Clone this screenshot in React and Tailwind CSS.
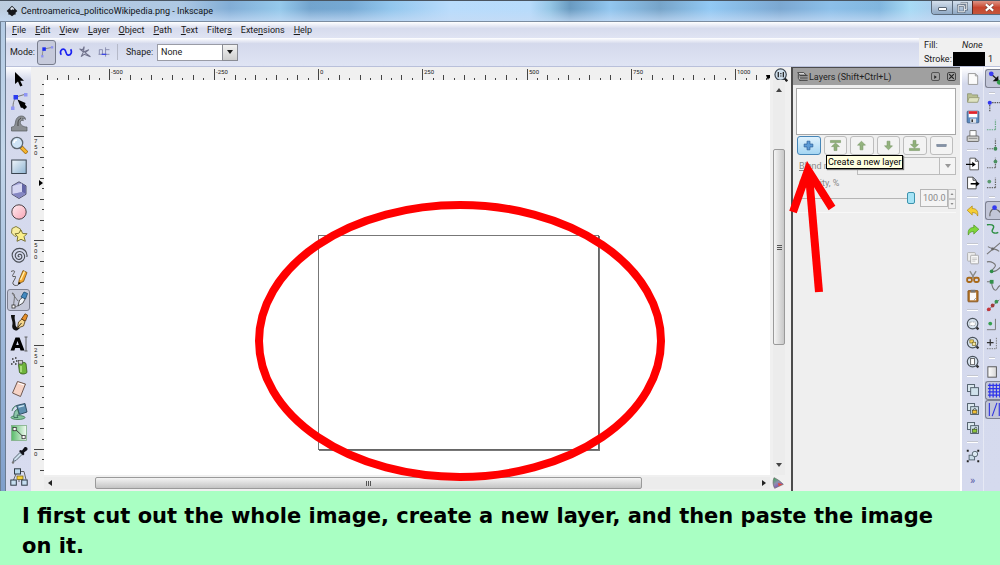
import React, { useState } from 'react';
import clsx from 'clsx';

// Base for the small toolbar drawings
function Ico({ size = 18, className, children }) {
  return (
    <svg width={size} height={size} viewBox="0 0 18 18" fill="none" className={clsx('shrink-0', className)} aria-hidden="true">
      {children}
    </svg>
  );
}

// ---------- Toolbox ----------
const tools = [
  ['Select', <path d="M5 2v12l3-2.600 2.200 5 2.300-1-2.300-4.600H14z" fill="#000" />],
  ['Edit nodes', <>
    <path d="M3 16C3 10 4 8 6 6M6 5l10-3" stroke="#777" />
    <rect x="3.500" y="3" width="4.500" height="4.500" fill="#2a3cf0" />
    <rect x="14" y="1" width="3.500" height="3.500" fill="#8f96f5" />
    <rect x="1" y="14.500" width="3.500" height="3.500" fill="#8f96f5" />
    <path d="M7.500 7.500l8 3.500-.5 1.500 2 2.500-2.500 2.500-2.500-2-1 .5z" fill="#000" />
  </>],
  ['Tweak', <>
    <path d="M1.500 17v-4c3 0 3.500-2 4-5C6 4 8.500 2 11.500 2c2.500 0 4 1.500 4 3.500-1-1-2.500-1.300-3.500-.8 1 .3 1.500 1 1.300 2-1.300-.7-3-.2-3 1.800 0 2.500 3 4.500 6.700 4.500v4z" fill="#8b8f93" stroke="#55595d" strokeWidth=".7" />
    <path d="M8 12c0-3-.5-6 3-8" stroke="#444" />
  </>],
  ['Zoom', <>
    <path d="M11 11l6 6" stroke="#a06a10" strokeWidth="4" />
    <path d="M11.500 11.500l5 5" stroke="#f5b52e" strokeWidth="2.500" />
    <circle cx="7" cy="7" r="5.700" fill="#cfe4f6" stroke="#5c6670" strokeWidth="1.300" />
    <path d="M4 7c0-2 1-3 3-3" stroke="#fff" strokeWidth="1.500" />
  </>],
  ['Rectangle', <>
    <rect x="1.700" y="2" width="14.500" height="13.500" fill="url(#rectFill)" stroke="#3a4450" />
  </>],
  ['3D box', <>
    <path d="M9 .8l7 4v8.500l-7 4.200-7-4.200V4.800z" fill="#a3a4d8" stroke="#46465e" strokeWidth=".9" />
    <path d="M2.500 5L12 2.500V11l-9.500 2z" fill="#d5d6f2" />
    <path d="M12 2.500l3.700 2.500v8L12 11z" fill="#6365a6" />
    <path d="M2.500 13L12 11l3.500 2L9 17z" fill="#8587c2" />
  </>],
  ['Ellipse', <circle cx="9" cy="9" r="7.200" fill="url(#pinkFill)" stroke="#4d4045" />],
  ['Star', <>
    <path d="M2 3.500l4-2 4.500 2.500L10 9l-5 2.500L1.500 8z" fill="#f7eda0" stroke="#7b7430" strokeWidth=".9" />
    <path d="M11 5l1.700 3.500 4.300.2-3 3 1.300 4.600-4.300-2-4 2 .8-4.500-2.800-3 3.800-.5z" fill="#fbf08a" stroke="#6f6828" strokeWidth=".9" />
  </>],
  ['Spiral', <path d="M9.500 9.500c-.8.700-1.800-.2-1.300-1.300.8-1.600 3.700-1 3.700 1.400 0 3-4.200 4-5.900 1.200C4 7.500 6.500 4.300 9.800 4.500c3.500.2 5.500 3.500 4.600 6.700-1.200 3.800-5.800 5-9 2.800C1.500 11.300 1.300 6.500 4 3.600 7 .6 12 .6 15 3.500c1.700 1.700 2.300 4 1.900 6.500" stroke="#4a4e55" strokeWidth="1.100" />],
  ['Pencil', <>
    <path d="M1 2.500c2-1 4-1 3.500.5S1.500 7 3 7.500s3-1 2.500 1-3.500 5-2.500 6.500 3 2 5 1" stroke="#555" />
    <path d="M8.500 14.500l.8-4L13 1.500l4 2-3.500 9z" fill="#f6a931" stroke="#76500e" strokeWidth=".8" />
    <path d="M10.500 11l4-8.500" stroke="#fff3b0" strokeWidth="1.300" />
    <path d="M8 16l.8-3 2 1.300z" fill="#000" />
  </>],
  ['Bezier', <>
    <path d="M2 2c4 0 2 6 1.500 13M2 2l6 8M4 15.500c4 1 5-2 6-5" stroke="#666" strokeWidth=".9" />
    <path d="M8 15l1.500-6L13 6l2 2-2 4z" fill="#f0f4f8" stroke="#333" strokeWidth=".8" />
    <path d="M11 6l3-5 3.500 1.500L15.500 8z" fill="#4289c0" stroke="#1c4b70" strokeWidth=".8" />
    <rect x="2" y="14" width="3" height="3" fill="#fff" stroke="#333" strokeWidth=".8" />
  </>],
  ['Calligraphy', <>
    <path d="M1 2h4c-1 4 .5 6 .5 9 0 3 2 4 4.500 4l-3 2.500C3 17.500 1.500 15 2.500 11 3 8 1 6 1 2z" fill="#111" />
    <path d="M7.500 15l1-6 3.500-3 3 2.500-1.500 4.500z" fill="#f4d58d" stroke="#4a3510" strokeWidth=".8" />
    <path d="M11.500 6L15 .8l2.700 1.500L15.500 8z" fill="#e8902a" stroke="#5b3506" strokeWidth=".8" />
    <path d="M8 14l3.500-4" stroke="#222" strokeWidth=".9" />
  </>],
  ['Text', <>
    <path d="M14.500 2h3M16 2v14M14.500 16h3" stroke="#555" strokeWidth=".9" />
    <path fillRule="evenodd" d="M.5 15.500L5.500 2.500h4l5 13h-4l-.8-2.500H5.200l-.8 2.500zM6.200 10h2.600L7.500 6z" fill="#000" />
  </>],
  ['Spray', <>
    <path d="M8.500 8c0-2 5-4 7.500-1.500l1 9c-2 2-6 2-7.500 0z" fill="#6fb43c" stroke="#33581a" strokeWidth=".8" />
    <path d="M11 9v6" stroke="#b9ea8c" strokeWidth="1.500" />
    <rect x="8.500" y="3.500" width="4" height="3.500" fill="#ccc" stroke="#444" strokeWidth=".7" />
    <path d="M2 2h1.500M5 1h1.500M3 5h1.500M6 4h1.500M1 7h1.500M5 7h1.500" stroke="#333" strokeWidth="1.500" />
  </>],
  ['Eraser', <>
    <path d="M7.500 1.500l8 2.500-5 12.500-8-3.500z" fill="#f6d3c6" stroke="#6e5850" />
    <path d="M8 3l6 2" stroke="#fff" />
  </>],
  ['Paint bucket', <>
    <ellipse cx="8" cy="15.500" rx="7" ry="2" fill="#86c79c" stroke="#3c7550" strokeWidth=".8" />
    <path d="M6.500 3.500l8.500-2 2 8.500-7.500 2.500z" fill="#5d8fae" stroke="#28455a" strokeWidth=".9" />
    <path d="M6.500 3.500c-3 1-4 3-4.500 5.500M5 9c-1 2-1.500 4-1 6.500h4c-1.500-2-1-3 1-3.500L7.500 7z" fill="#8cc4a8" stroke="#2f5f50" strokeWidth=".8" />
    <path d="M8.500 5l5.500-1.300" stroke="#cfe6f2" strokeWidth="1.300" />
  </>],
  ['Gradient', <>
    <rect x="1.500" y="1.500" width="15" height="15" fill="url(#greenFill)" stroke="#7fae86" strokeWidth=".8" />
    <path d="M5 5l8.500 8" stroke="#333" strokeWidth=".9" />
    <rect x="3" y="3.500" width="3.200" height="3.200" fill="#fff" stroke="#333" strokeWidth=".8" />
    <rect x="12" y="11.500" width="3.200" height="3.200" fill="#fff" stroke="#333" strokeWidth=".8" />
  </>],
  ['Dropper', <>
    <path d="M3 15.500l1-3L10 6.500l2 2L6 14.500z" fill="#cfe1ee" stroke="#4d5a66" strokeWidth=".9" />
    <path d="M9 5l1.500-1 1.500.5 2.500-3.200c2-1 4 1 2.500 3L14 6.500l.3 1.700L13 9.500z" fill="#101018" />
    <circle cx="3" cy="16.500" r="1.200" fill="#777" />
  </>],
  ['Connector', <>
    <path d="M6 6L3.500 12M10 3.500h4l2 8M9 11v3" stroke="#555" strokeWidth=".9" />
    <rect x="4.500" y=".8" width="6" height="5.200" fill="#bcd8ec" stroke="#2f3b46" />
    <rect x="7" y="8" width="6" height="3.500" fill="#f7d33c" stroke="#6d5a0c" strokeWidth=".7" />
    <rect x=".8" y="12" width="5.500" height="5.200" fill="#c5dff0" stroke="#2f3b46" />
    <rect x="11.700" y="12" width="5.500" height="5.200" fill="#c5dff0" stroke="#2f3b46" />
  </>],
];

// ---------- Command bar ----------
const magnifier = (
  <>
    <path d="M12.500 12.500l3.500 3.500" stroke="#333" strokeWidth="3" />
    <circle cx="8.500" cy="8.500" r="6.800" fill="#d6e2ee" stroke="#4a525c" strokeWidth="1.500" />
  </>
);
const stacked = (
  <>
    <rect x="2" y="2" width="9" height="9" fill="#dce9f0" stroke="#4c5a66" strokeWidth="1.200" />
    <rect x="6" y="6" width="10" height="10" fill="#d0e2ec" stroke="#4c5a66" strokeWidth="1.200" />
  </>
);
const page = <path d="M5 1.500h7l4 4v11H5zM12 1.500v4h4" fill="#fff" stroke="#555" strokeWidth="1.200" />;

const commands = [
  ['New', <path d="M3 2h9l3 3v11H3zM12 2v3h3" fill="#fbfbfb" stroke="#999" strokeWidth="1.200" />],
  ['Open', <>
    <path d="M2 14V3.500h5L8.500 5H15v9z" fill="#b8bf92" stroke="#848a64" strokeWidth=".9" />
    <path d="M2 14.500l2-6h13l-2 6z" fill="#dfe3c2" stroke="#8c926c" strokeWidth=".9" />
  </>],
  ['Save', <>
    <rect x="1.500" y="1.500" width="15" height="15" rx="1" fill="#5a8ac0" stroke="#32557e" />
    <rect x="3.500" y="1.500" width="11" height="8" fill="#fff" />
    <rect x="3.500" y="1.500" width="11" height="3.500" fill="#e0242c" />
    <rect x="5.500" y="11" width="7.500" height="5.500" fill="#dde2e8" />
    <rect x="7" y="12" width="2" height="3.500" fill="#333" />
  </>],
  ['Print', <>
    <path d="M5 9V2h8v7" fill="#fff" stroke="#777" strokeWidth="1.200" />
    <rect x="1.500" y="9" width="15" height="7" rx="1" fill="#d5d5d2" stroke="#666" strokeWidth="1.200" />
    <path d="M3.500 12h11" stroke="#777" />
  </>],
  null,
  ['Import', <>{page}<path d="M0 9.500h9" stroke="#000" strokeWidth="1.600" /><path d="M8 6l4.500 3.500L8 13z" fill="#000" /></>],
  ['Export', <>
    <path d="M2 1.500h7l4 4v11H2zM9 1.500v4h4" fill="#fff" stroke="#444" strokeWidth="1.200" />
    <path d="M6 10h8" stroke="#000" strokeWidth="2" /><path d="M13 6.500l4.500 3.500-4.500 3.500z" fill="#000" />
  </>],
  null,
  ['Undo', <path d="M1.500 8L8 2.500v3.300c5 0 8 2.500 7 9.700-1.500-3.500-3-4.500-7-4.500v3.200z" fill="#f6cf35" stroke="#b08a12" strokeWidth=".9" />],
  ['Redo', <path d="M16.500 8L10 2.500v3.300c-5 0-8 2.500-7 9.700 1.500-3.500 3-4.500 7-4.500v3.200z" fill="#7fd63a" stroke="#4c9420" strokeWidth=".9" />],
  null,
  ['Copy', <>
    <rect x="2" y="2" width="10" height="11" rx="1" fill="#eee" stroke="#a5a5a5" />
    <rect x="6" y="5.500" width="10" height="11" rx="1" fill="#f8f8f8" stroke="#999" />
    <path d="M8 9h6M8 11h6M8 13h4" stroke="#bbb" />
  </>],
  ['Cut', <>
    <path d="M5 1.500l6 9.500M13 1.500L7 11" stroke="#8b8b88" strokeWidth="1.800" />
    <rect x="1.500" y="10" width="6" height="5.500" rx="2" stroke="#a8691a" strokeWidth="2.400" />
    <rect x="10.500" y="10" width="6" height="5.500" rx="2" stroke="#a8691a" strokeWidth="2.400" />
  </>],
  ['Paste', <>
    <rect x="2.500" y="2" width="13" height="14.500" rx="1" fill="#b4752a" stroke="#7b4a12" />
    <rect x="5" y="4.500" width="8" height="10" fill="#fafafa" />
    <rect x="6" y="1" width="6" height="3.500" fill="#777" />
    <path d="M10 14.500l3-3" stroke="#888" />
  </>],
  null,
  ['Zoom selection', <>{magnifier}<rect x="5" y="6.500" width="7" height="4.500" fill="#fff" stroke="#888" strokeDasharray="1 1" /></>],
  ['Zoom drawing', <>{magnifier}<rect x="5" y="5" width="4.500" height="4" fill="#f5d560" stroke="#6e5c18" strokeWidth=".8" /><rect x="8" y="8" width="4.500" height="4" fill="#f9e9a0" stroke="#6e5c18" strokeWidth=".8" /></>],
  ['Zoom page', <>{magnifier}<rect x="6" y="4.500" width="5" height="8" fill="#fff" stroke="#444" /></>],
  null,
  ['Duplicate', stacked],
  ['Clone', <>{stacked}<rect x="8.500" y="10.500" width="5.500" height="4" fill="#f3c136" stroke="#4e3d0a" strokeWidth=".8" /><path d="M9.500 10.500c0-3 3.500-3 3.500 0" stroke="#333" /></>],
  ['Unlink clone', <>{stacked}<rect x="8.500" y="10.500" width="5.500" height="4" fill="#8dc63a" stroke="#28400e" strokeWidth=".8" /><path d="M10.500 10.500c0-3 3.500-3 3.500-1" stroke="#333" /></>],
  null,
  ['Group', <>
    <path d="M1 1h2.500v2.500H1zM14.500 1H17v2.500h-2.500zM1 14.500h2.500V17H1zM14.500 14.500H17V17h-2.500z" fill="#222" />
    <rect x="4" y="8" width="7" height="6" fill="#c8dce8" stroke="#54636e" strokeWidth="1.200" />
    <circle cx="11.500" cy="6.500" r="3.500" fill="#dbe9f2" stroke="#54636e" strokeWidth="1.200" />
  </>],
];

// ---------- Snap bar ----------
const snaps = [
  ['Enable snapping', <>
    <path d="M4 4l9 8" stroke="#222" strokeWidth="1.300" />
    <path d="M12 6v6H6z" fill="#111" />
    <circle cx="4.500" cy="4" r="2.500" fill="#3a3cf2" /><circle cx="13" cy="13" r="2.500" fill="#2f9b48" />
  </>, true],
  null,
  ['Snap bounding boxes', <><path d="M4 5h14M4 5v10" stroke="#555" strokeDasharray="1.500 1" strokeWidth="1.300" /><circle cx="4" cy="5" r="2.200" fill="#3137ef" /></>],
  ['Snap edges', <path d="M1 13.500h9M10 13.500V3" stroke="#6aa884" strokeDasharray="1.500 1" strokeWidth="1.300" />],
  ['Snap corners', <><path d="M1 13.500h9M10 13.500V3" stroke="#666" strokeDasharray="1.500 1" strokeWidth="1.300" /><circle cx="10" cy="13.500" r="2" fill="#3f8a55" /></>],
  ['Snap edge midpoints', <><path d="M1 13.500h9M10 13.500V3" stroke="#666" strokeDasharray="1.500 1" strokeWidth="1.300" /><circle cx="10" cy="7" r="2" fill="#4a8f5f" /></>],
  ['Snap centers', <><path d="M1 14.500h9M10 14.500V4" stroke="#666" strokeDasharray="1.500 1" strokeWidth="1.300" /><circle cx="3.500" cy="8" r="2" fill="#5b9a6e" /></>],
  null,
  ['Snap nodes', <><path d="M3 15C3 9 6 5 12 9l6 6" stroke="#666" strokeWidth="1.200" /><circle cx="8" cy="6" r="2.500" fill="#343af0" /></>, true],
  ['Snap to paths', <path d="M1 4c8-1 8 2 6 5s2 5 6 3" stroke="#2e8f45" strokeWidth="1.500" />],
  ['Snap intersections', <><path d="M1 15L15 3M2 7c5 3 8 2 12 5" stroke="#777" strokeWidth="1.200" /><circle cx="7" cy="9.500" r="1.500" fill="#666" /></>],
  ['Snap cusp nodes', <><path d="M1 3c5-1 9 2 9 4s-3 3-4 6c3 1 6-1 9-4" stroke="#777" strokeWidth="1.200" /><circle cx="6" cy="13" r="2" fill="#2f8d48" /></>],
  ['Snap smooth nodes', <><path d="M1 4h5c0 5 2 9 4 9s2-4 5-5" stroke="#777" strokeWidth="1.200" /><rect x="4" y="2" width="4" height="4" fill="#33904b" /></>],
  ['Snap line midpoints', <><path d="M1 15L14 3" stroke="#777" /><circle cx="3" cy="13" r="2" fill="#c5363c" /><circle cx="7" cy="9" r="2" fill="#a33b3b" /><circle cx="11" cy="5" r="2" fill="#3a9350" /></>],
  ['Snap object centers', <><path d="M1 14.500h9V3" stroke="#777" /><circle cx="4.500" cy="8" r="2" fill="#35a04e" /></>],
  ['Snap rotation center', <><path d="M1 8h7M4.500 4.500v7" stroke="#333" strokeWidth="1.300" /><path d="M1 14.500h10V3" stroke="#777" strokeDasharray="1.500 1" /></>],
  null,
  ['Snap page border', <rect x="2" y="4" width="9" height="11" fill="url(#paperFill)" stroke="#555" />],
  ['Snap to grids', <path d="M1 3.500h14M1 7h14M1 10.500h14M1 14h14M3 1.500v15M6.500 1.500v15M10 1.500v15M13.500 1.500v15" stroke="#2e34ea" strokeWidth="1.300" />, true],
  ['Snap to guides', <path d="M2.500 2v14M5.500 16L10.500 2M13 2v14" stroke="#3136e0" strokeWidth="1.200" />, true],
];

// ---------- Menus and control bar ----------
const menus = [
  ['', 'F', 'ile'], ['', 'E', 'dit'], ['', 'V', 'iew'], ['', 'L', 'ayer'], ['', 'O', 'bject'],
  ['', 'P', 'ath'], ['', 'T', 'ext'], ['Filter', 's', ''], ['Exte', 'n', 'sions'], ['', 'H', 'elp'],
];

const modes = [
  ['Regular path', <><path d="M3 15C3 9 3.500 7 6 5M6 5l10-2" stroke="#777" /><rect x="3" y="3" width="4.500" height="4.500" fill="#1c2cf0" /><rect x="1.500" y="13" width="3" height="3" fill="#8a91f2" /><rect x="14" y="1.500" width="3" height="3" fill="#8a91f2" /></>],
  ['Spiro path', <path d="M3 12.500C.5 9 3 4.500 6.500 5.500 10 7 8 12.500 11.500 13c4 .5 5.500-4 3.500-7.500" stroke="#1b22f2" strokeWidth="2.200" />],
  ['Zigzag', <path d="M2 5l4 1 2-4-1 7 7-3-5 4 7 5-8-3-4 3 3-6z" stroke="#70728c" strokeWidth="1.300" />],
  ['Paraxial', <><path d="M2 12h14M11 3v12M7 12V6H3v6M11 6h5" stroke="#8184a8" strokeWidth="1.100" /><path d="M6 12h6" stroke="#3a45e8" strokeWidth="1.600" /></>],
];

const layerButtons = [
  ['Create a new layer', <path d="M7 3h4v4h4v4h-4v4H7v-4H3V7h4z" fill="#5c9bd6" stroke="#2a5e98" />],
  ['Raise to top', <path d="M2 2h14v3H2zM9 5.500l5.500 5H11V16H7v-5.500H3.500z" fill="#8fb079" stroke="#6d8d5a" strokeWidth=".7" />],
  ['Raise', <path d="M9 3l5.500 5.500H11V15H7V8.500H3.500z" fill="#93b37e" stroke="#6d8d5a" strokeWidth=".7" />],
  ['Lower', <path d="M9 15l5.500-5.500H11V3H7v6.500H3.500z" fill="#93b37e" stroke="#6d8d5a" strokeWidth=".7" />],
  ['Lower to bottom', <path d="M2 13h14v3H2zM9 12.500l5.500-5H11V2H7v5.500H3.500z" fill="#8fb079" stroke="#6d8d5a" strokeWidth=".7" />],
  ['Delete layer', <rect x="2.500" y="7.500" width="13" height="3" fill="#8492a6" stroke="#66748a" strokeWidth=".7" />],
];

// Shared gradients used by several icons
function Defs() {
  return (
    <svg width="0" height="0" className="absolute" aria-hidden="true">
      <defs>
        <linearGradient id="rectFill" x1="1" y1="1" x2="0" y2="0"><stop stopColor="#8fb4d2" /><stop offset="1" stopColor="#f0f6fb" /></linearGradient>
        <linearGradient id="paperFill"><stop stopColor="#fff" /><stop offset="1" stopColor="#d6d6d6" /></linearGradient>
        <linearGradient id="pinkFill" x1="0" y1="0" x2="1" y2="1"><stop stopColor="#ffeef2" /><stop offset="1" stopColor="#f7a3b4" /></linearGradient>
        <linearGradient id="greenFill"><stop stopColor="#57bb68" /><stop offset="1" stopColor="#f3fbf4" /></linearGradient>
        <linearGradient id="gamut" x1="0" y1="0" x2=".6" y2="1"><stop stopColor="#2fae4c" /><stop offset=".5" stopColor="#8f8fae" /><stop offset="1" stopColor="#7a3fc0" /></linearGradient>
      </defs>
    </svg>
  );
}

// Pixel spacing of one small ruler division (250 units = 10 divisions)
const STEP = 10.43;

function HRuler() {
  const ticks = [];
  for (let i = -26; i <= 43; i++) ticks.push(i);
  return (
    <svg className="w-full h-full bg-[#f0f0f0] overflow-hidden" aria-hidden="true">
      {ticks.map((i) => {
        const x = Math.round(274 + i * STEP);
        const top = i % 10 === 0 ? 2 : i % 2 === 0 ? 8 : 11;
        return <rect key={i} x={x} y={top} width="1" height={13 - top} fill="#444" />;
      })}
      {[-500, -250, 0, 250, 500, 750, 1000].map((v) => (
        <text key={v} x={Math.round(276 + (v / 25) * STEP)} y="7" fontSize="6" fill="#222">{v}</text>
      ))}
      <path d="M722 8h5v4l-2-1-1 2-1-2z" fill="#000" />
    </svg>
  );
}

function VRuler() {
  const ticks = [];
  for (let i = -3; i <= 35; i++) ticks.push(i);
  return (
    <svg className="w-full h-full bg-[#f0f0f0] overflow-hidden" aria-hidden="true">
      {ticks.map((i) => {
        const y = Math.round(369 - i * STEP);
        const left = i % 10 === 0 ? 3 : i % 2 === 0 ? 9 : 11;
        return <rect key={i} x={left} y={y} width={13 - left} height="1" fill="#444" />;
      })}
      {[0, 250, 500, 750].map((v) =>
        String(v).split('').map((d, n) => (
          <text key={`${v}-${n}`} x="3" y={Math.round(376 - (v / 25) * STEP + n * 6)} fontSize="6" fill="#222">{d}</text>
        ))
      )}
      <path d="M8 100l4 3-4 3z" fill="#000" />
    </svg>
  );
}

function Separator() {
  return (
    <div className="h-[9px] w-full shrink-0 flex items-center px-[5px]">
      <div className="h-[2px] w-full bg-[#c3c6d0] border-b border-white"></div>
    </div>
  );
}

function Caret({ dir = 'down', className }) {
  const d = { down: 'M1 2h6L4 6z', up: 'M1 6h6L4 2z', left: 'M6 1v6L2 4z', right: 'M2 1v6l4-3z' }[dir];
  return <svg width="8" height="8" viewBox="0 0 8 8" className={clsx('shrink-0', className)} aria-hidden="true"><path d={d} fill="currentColor" /></svg>;
}

function TitleBar() {
  return (
    <header className="h-[22px] shrink-0 flex items-center pl-[6px] border-t border-b border-t-[#4a5561] border-b-[#7b8ca0] bg-[linear-gradient(180deg,rgba(255,255,255,0.05)_40%,rgba(200,220,245,0.75)),linear-gradient(90deg,#b9cadd_0%,#a9c5e2_18%,#7ba9d4_23%,#8fc6ea_28%,#6b9fcb_31%,#6fa5d2_35%,#8cc3ec_39%,#b5dafc_45%,#b3d9fb_53%,#8fc3e4_55%,#6195bd_57%,#8cc3ee_61%,#6f9fc6_66%,#8cc6f3_71%,#74a3cf_78%,#86bce8_83%,#7ab2dc_88%,#a3d9f5_91%,#a6c8ea_94%)]">
      <Ico size={12}>
        <path d="M9 1l8 8-3 3 1 2-3 .5L9 17l-3-2.500L3 14l1-2-3-3z" fill="#16181c" />
        <path d="M9 2.500L12.500 6 11 7.500 9.500 6.500 8 8 6 6z" fill="#dfe6ee" />
      </Ico>
      <h1 className="ml-[3px] text-[9px] leading-[14px] text-[#101418]">Centroamerica_politicoWikipedia.png - Inkscape</h1>
      <div className="ml-auto self-start h-[14px] flex border-l border-b border-[#5c6b7c] rounded-bl-sm overflow-hidden text-white">
        <button aria-label="Minimize" className="w-[20px] flex items-center justify-center bg-linear-to-b from-[#d3dfec] to-[#8fa8c4]">
          <span className="w-[9px] h-[4px] mt-[3px] bg-white border border-[#5a6675] rounded-[1px]"></span>
        </button>
        <button aria-label="Restore" className="w-[20px] flex items-center justify-center border-l border-[#5c6b7c] bg-linear-to-b from-[#d3dfec] to-[#8fa8c4]">
          <Ico size={11}><path d="M6 2h10v10h-4M2 6h10v10H2z" stroke="#566475" strokeWidth="3.500" /><path d="M6 2h10v10h-4M2 6h10v10H2z" stroke="#fff" strokeWidth="1.500" /></Ico>
        </button>
        <button aria-label="Close" className="w-[28px] pl-[6px] flex items-center justify-center border-l border-[#5c2a24] bg-linear-to-b from-[#dc9284] via-[#c8452e] to-[#c4563c]">
          <Ico size={11}><path d="M3 4l12 10M15 4L3 14" stroke="#6a3a36" strokeWidth="5.500" /><path d="M3 4l12 10M15 4L3 14" stroke="#fff" strokeWidth="3.500" /></Ico>
        </button>
      </div>
    </header>
  );
}

function ControlBar() {
  const [mode, setMode] = useState(0);
  return (
    <div className="h-[29px] shrink-0 flex items-stretch bg-linear-to-b from-white via-[#d4d9ec] via-20% to-[#dfe4f4] border-b border-[#b9c0da]">
      <div className="flex-1 flex items-center pl-1">
        <span className="w-[27px]">Mode:</span>
        {modes.map(([name, art], i) => (
          <button
            key={name}
            aria-label={name}
            aria-pressed={mode === i}
            onClick={() => setMode(i)}
            className={clsx('w-[19px] h-[25px] flex items-center justify-center rounded-[3px]', mode === i && 'border border-[#777c8c] bg-[#c6cadb]')}
          >
            <Ico size={14}>{art}</Ico>
          </button>
        ))}
        <span className="w-px h-[16px] ml-[4px] mr-[8px] bg-[#b5b9c8]"></span>
        <label htmlFor="shape" className="w-[31px]">Shape:</label>
        <div className="relative w-[81px] h-[17px]">
          <select id="shape" defaultValue="None" className="appearance-none w-full h-full pl-[3px] pr-4 bg-white border border-[#9a9ca6] leading-[14px]">
            <option>None</option>
            <option>Triangle in</option>
            <option>Triangle out</option>
            <option>Ellipse</option>
          </select>
          <span className="absolute right-0 top-0 w-[16px] h-full flex items-center justify-center border border-[#8a8c94] bg-linear-to-b from-[#f2f2f2] to-[#cfcfcf] pointer-events-none">
            <Caret />
          </span>
        </div>
      </div>
      <div className="w-[81px] pl-[5px] bg-[#f0f0f0] flex flex-col">
        <div className="h-[14px] flex items-center"><span className="w-[38px]">Fill:</span><em>None</em></div>
        <div className="flex-1 flex items-stretch">
          <span className="w-[29px] self-center">Stroke:</span>
          <span className="w-[32px] bg-black"></span>
          <span className="pl-[3px] self-center">1</span>
        </div>
      </div>
    </div>
  );
}

function Toolbox() {
  const [active, setActive] = useState('Bezier');
  return (
    <div className="w-[25px] shrink-0 flex flex-col items-center justify-between pt-px pb-[3px] bg-linear-to-b from-white via-[#d4d9ec] via-3% to-[#d8dcf0]">
      {tools.map(([name, art]) => (
        <button
          key={name}
          aria-label={name}
          aria-pressed={active === name}
          onClick={() => setActive(name)}
          className={clsx('w-[23px] h-[22px] flex items-center justify-center', active === name && 'border border-[#7c8090] rounded-[3px] bg-[#c5c9d9]')}
        >
          <Ico>{art}</Ico>
        </button>
      ))}
    </div>
  );
}

function Canvas() {
  return (
    <main className="flex-1 min-w-0 grid grid-cols-[13px_1fr_21px] grid-rows-[13px_1fr_16px] bg-[#f0f0f0]">
      <div></div>
      <HRuler />
      <button aria-label="Zoom 1:1" className="flex items-start justify-center pt-px">
        <Ico size={14}>
          <path d="M13 13l4 4" stroke="#222" strokeWidth="3" />
          <circle cx="8.500" cy="8.500" r="7.300" fill="#cfdfec" stroke="#39434d" strokeWidth="1.500" />
          <path d="M5.500 5v7M12 5v7M8.800 6.500v1.500M8.800 9.500v1.500" stroke="#222" strokeWidth="1.600" />
        </Ico>
      </button>

      <VRuler />
      <div className="relative bg-white">
        {/* Page outline with its drop shadow */}
        <div className="absolute left-[274px] top-[155px] w-[281px] h-[215px] border border-[#777] border-r-[#666] border-b-[#666] shadow-[1px_1px_0_#777]"></div>
        {/* Highlight ring round the page */}
        <svg width="412" height="282" viewBox="0 0 412 282" className="absolute left-[210px] top-[120px] z-10" aria-hidden="true">
          <ellipse cx="206" cy="141" rx="201" ry="136" fill="none" stroke="#ff0000" strokeWidth="8" />
        </svg>
      </div>
      <div className="flex flex-col items-center py-[6px] ml-[3px] mr-[6px] bg-[#ececec] text-[#444]">
        <Caret dir="up" />
        <div className="h-[55px] shrink"></div>
        <div className="w-full h-[196px] shrink-0 flex flex-col items-center justify-center gap-px border border-[#9a9a9a] rounded-[2px] bg-linear-to-r from-[#f4f4f4] to-[#c8c8c8]">
          <span className="w-[5px] h-px bg-[#555]"></span>
          <span className="w-[5px] h-px bg-[#555]"></span>
          <span className="w-[5px] h-px bg-[#555]"></span>
        </div>
        <Caret className="mt-auto" />
      </div>

      <div></div>
      <div className="flex items-center px-[2px] my-[2px] bg-[#ececec] text-[#222]">
        <Caret dir="left" />
        <div className="w-[41px]"></div>
        <div className="h-full w-[547px] flex items-center justify-center gap-px border border-[#9a9a9a] rounded-[2px] bg-linear-to-b from-[#f4f4f4] to-[#c4c4c4]">
          <span className="w-px h-[5px] bg-[#555]"></span>
          <span className="w-px h-[5px] bg-[#555]"></span>
          <span className="w-px h-[5px] bg-[#555]"></span>
        </div>
        <Caret dir="right" className="ml-auto" />
      </div>
      <button aria-label="Color management" className="flex items-center justify-center pr-[5px]">
        <Ico size={12}>
          <path d="M3 1c5 2 10 6 14 10L4 17C1 12 1 6 3 1z" fill="url(#gamut)" stroke="#666" />
          <path d="M9 9l7 2-6 3z" fill="#e0503c" />
        </Ico>
      </button>
    </main>
  );
}

function LayersDock() {
  const [opacity, setOpacity] = useState(100);
  return (
    <aside className="relative w-[169px] shrink-0 mr-[2px] border-l-2 border-t border-[#4c4c4c] bg-[#efefef]">
      <div className="h-[17px] flex items-center pl-1 pr-[4px] bg-[#a0a0a0] text-[#222]">
        <Ico size={12}>
          <path d="M1 2.500h9l4 3.500H4zM4 7h12M4 10.500h12M4 14h12M2 5v6l3 4" fill="#eee" stroke="#333" strokeWidth="1.300" />
        </Ico>
        <h2 className="flex-1 whitespace-nowrap">Layers (Shift+Ctrl+L)</h2>
        <button aria-label="Iconify" className="size-[9px] mr-[7px] flex items-center justify-center border border-[#555] rounded-[2px]"><Caret dir="right" className="w-[5px]" /></button>
        <button aria-label="Close dock" className="size-[9px] flex items-center justify-center border border-[#444] rounded-[2px]">
          <Ico size={7}><path d="M3 3l12 12M15 3L3 15" stroke="#222" strokeWidth="3" /></Ico>
        </button>
      </div>

      <div className="pl-[3px] pr-[4px] pt-[3px] text-[#8a8a8a]">
        <div className="h-[47px] bg-white border border-[#a8a8a8]"></div>
        <div className="flex gap-[3px] pt-px pl-px pr-[3px]">
          {layerButtons.map(([name, art], i) => (
            <button
              key={name}
              aria-label={name}
              className={clsx('flex-1 h-[19px] flex items-center justify-center rounded-[3px] border', i === 0 ? 'border-[#4686b8] bg-linear-to-b from-[#dff1fc] to-[#a5d6f3]' : 'border-[#bdbdbd] bg-[#f3f3f3]')}
            >
              <Ico size={13}>{art}</Ico>
            </button>
          ))}
        </div>

        <div className="flex items-center mt-[2px] pl-[3px]">
          <label htmlFor="blend" className="w-[58px] whitespace-nowrap"><u>B</u>lend mode:</label>
          <div className="relative flex-1 h-[18px]">
            <select id="blend" disabled className="appearance-none w-full h-full border border-[#bcbcbc] bg-[#f1f1f1]"></select>
            <span className="absolute right-0 top-0 w-[17px] h-full flex items-center justify-center border border-[#bcbcbc] bg-[#f4f4f4] text-[#999] pointer-events-none"><Caret /></span>
          </div>
        </div>

        <label htmlFor="opacity" className="block pl-[3px] pt-[2px] leading-[12px]">Opacity, %</label>
        <div className="flex items-center pl-[3px] pb-[5px] border-b border-[#f8f8f8]">
          <input
            id="opacity"
            type="range"
            min="0"
            max="100"
            value={opacity}
            onChange={(e) => setOpacity(Number(e.target.value))}
            className="appearance-none flex-1 min-w-0 h-[12px] mr-[5px] bg-[linear-gradient(#b5b5b5,#b5b5b5)] bg-[length:100%_1px] bg-center bg-no-repeat [&::-webkit-slider-thumb]:appearance-none [&::-webkit-slider-thumb]:w-[8px] [&::-webkit-slider-thumb]:h-[12px] [&::-webkit-slider-thumb]:rounded-[2px] [&::-webkit-slider-thumb]:border [&::-webkit-slider-thumb]:border-[#3d93ad] [&::-webkit-slider-thumb]:bg-[#a5e4f6]"
          />
          <input aria-label="Opacity value" value={opacity.toFixed(1)} readOnly className="w-[28px] h-[18px] pl-[2px] border border-[#b5b5b5] bg-[#f4f4f4]" />
          <div className="w-[8px] h-[18px] flex flex-col">
            <button aria-label="Increase" className="flex-1 border border-[#c4c4c4] flex items-center justify-center"><Caret dir="up" className="w-[4px]" /></button>
            <button aria-label="Decrease" className="flex-1 border border-[#c4c4c4] flex items-center justify-center"><Caret className="w-[4px]" /></button>
          </div>
        </div>
      </div>

      <div role="tooltip" className="absolute left-[33px] top-[87px] h-[14px] px-px flex items-center whitespace-nowrap bg-[#ffffe1] border border-black text-black shadow-[1px_1px_1px_#777]">
        Create a new layer
      </div>
      {/* Arrow that points at the "new layer" button */}
      <svg width="48" height="134" viewBox="0 0 48 134" fill="none" className="absolute left-[-4px] top-[93px] z-10" aria-hidden="true">
        <path d="M20 14l10 117" stroke="#ff0000" strokeWidth="8" />
        <path d="M4 51L19 9l24 38" stroke="#ff0000" strokeWidth="8" strokeMiterlimit="10" />
      </svg>
    </aside>
  );
}

function SideBar({ items, label, className, btnClass, icon }) {
  return (
    <div role="toolbar" aria-label={label} className={clsx('shrink-0 pt-[2px] flex flex-col overflow-hidden bg-linear-to-b from-white via-[#d4d9ec] via-4% to-[#d5daee]', className)}>
      {items.map((item, i) =>
        item === null ? <Separator key={i} /> : (
          <button key={item[0]} aria-label={item[0]} className={clsx('h-[19px] shrink-0 flex items-center', btnClass, item[2] && 'border border-r-0 border-[#7d8192] rounded-l-[3px] bg-[#c2c6d8]')}>
            <Ico size={icon}>{item[1]}</Ico>
          </button>
        )
      )}
      {label === 'Commands' && <button aria-label="More commands" className="mt-[10px] text-[11px] leading-[12px] text-[#5a62a8]">»</button>}
    </div>
  );
}

export default function App() {
  return (
    <div className="h-screen flex flex-col overflow-hidden text-[9px] leading-[12px] text-[#1a1a1a] font-['Roboto','Open_Sans',sans-serif]">
      <Defs />
      <TitleBar />

      <div className="flex-1 min-h-0 flex">
        {/* Glass edge of the window */}
        <div className="w-[6px] shrink-0 border-l border-r border-l-[#6d7f93] border-r-[#6a7b90] bg-linear-to-b from-[#b4cbe4] via-[#c3d6ea] via-28% to-[#7f9fcb]"></div>

        <div className="flex-1 min-w-0 flex flex-col">
          <nav className="h-[16px] shrink-0 flex items-center gap-[9px] pl-[6px] bg-linear-to-b from-white via-[#d6dbed] via-40% to-[#e0e4f3]">
            {menus.map(([a, u, b]) => (
              <button key={a + u + b}>{a}<u>{u}</u>{b}</button>
            ))}
          </nav>
          <ControlBar />
          <div className="flex-1 min-h-0 flex">
            <Toolbox />
            <Canvas />
            <LayersDock />
            <SideBar items={commands} label="Commands" className="w-[22px] border-r border-[#e6e9f4]" btnClass="justify-center" icon={14} />
            <SideBar items={snaps} label="Snapping" className="w-[16px]" btnClass="w-[24px] ml-px pl-px" icon={17} />
          </div>
        </div>
      </div>

      <footer className="shrink-0 pl-[22px] pr-[60px] pt-[10px] pb-1 bg-[#a9ffc3]">
        <p className="text-[21px] leading-[30px] font-black text-black font-['DejaVu_Sans','Inter',sans-serif]">
          I first cut out the whole image, create a new layer, and then paste the image on it.
        </p>
      </footer>
    </div>
  );
}
